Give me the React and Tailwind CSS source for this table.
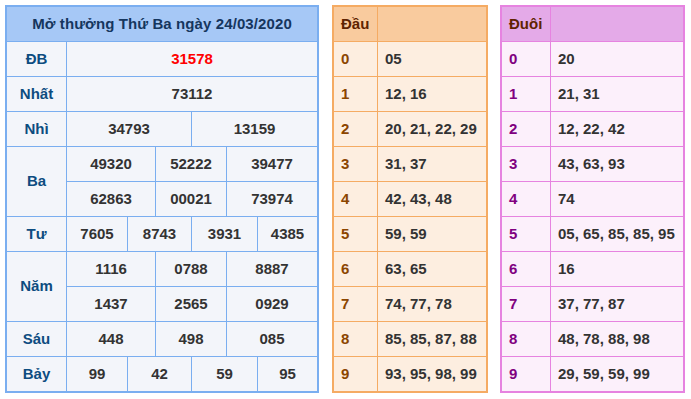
import React from 'react'

const font = { fontFamily: '"Liberation Sans", Arial, sans-serif' }

// left table: border-box widths of the number cells in each row (number area is 250px)
const prizes = [
  { label: 'ĐB', rows: [[{ v: '31578', w: 250, red: true }]] },
  { label: 'Nhất', rows: [[{ v: '73112', w: 250 }]] },
  { label: 'Nhì', rows: [[{ v: '34793', w: 124 }, { v: '13159', w: 126 }]] },
  {
    label: 'Ba',
    rows: [
      [{ v: '49320', w: 88 }, { v: '52222', w: 71 }, { v: '39477', w: 91 }],
      [{ v: '62863', w: 88 }, { v: '00021', w: 71 }, { v: '73974', w: 91 }],
    ],
  },
  {
    label: 'Tư',
    rows: [[{ v: '7605', w: 60 }, { v: '8743', w: 64 }, { v: '3931', w: 66 }, { v: '4385', w: 60 }]],
  },
  {
    label: 'Năm',
    rows: [
      [{ v: '1116', w: 88 }, { v: '0788', w: 71 }, { v: '8887', w: 91 }],
      [{ v: '1437', w: 88 }, { v: '2565', w: 71 }, { v: '0929', w: 91 }],
    ],
  },
  { label: 'Sáu', rows: [[{ v: '448', w: 88 }, { v: '498', w: 71 }, { v: '085', w: 91 }]] },
  {
    label: 'Bảy',
    rows: [[{ v: '99', w: 60 }, { v: '42', w: 64 }, { v: '59', w: 66 }, { v: '95', w: 60 }]],
  },
]

const dau = ['05', '12, 16', '20, 21, 22, 29', '31, 37', '42, 43, 48', '59, 59', '63, 65', '74, 77, 78', '85, 85, 87, 88', '93, 95, 98, 99']
const duoi = ['20', '21, 31', '12, 22, 42', '43, 63, 93', '74', '05, 65, 85, 85, 95', '16', '37, 77, 87', '48, 78, 88, 98', '29, 59, 59, 99']

function PrizeTable() {
  return (
    <div className="w-[314px] shrink-0 border-2 border-[#7aaef0] bg-[#f3f5fa] text-[15px] font-bold">
      <div className="h-[35px] border-b border-[#7aaef0] bg-[#a6c8f6] flex items-center justify-center text-[#15365e] tracking-[0.1px]">
        Mở thưởng Thứ Ba ngày 24/03/2020
      </div>
      {prizes.map((p, i) => (
        <div key={p.label} className={'flex ' + (i < prizes.length - 1 ? 'border-b border-[#7aaef0]' : '')}>
          <div className="w-[60px] shrink-0 border-r border-[#7aaef0] flex items-center justify-center text-[#0d4c80]">
            {p.label}
          </div>
          <div className="w-[250px] shrink-0 flex flex-col">
            {p.rows.map((r, j) => (
              <div key={j} className={'flex ' + (j < p.rows.length - 1 ? 'h-[35px] border-b border-[#7aaef0]' : 'h-[34px]')}>
                {r.map((c, k) => (
                  <div
                    key={k}
                    style={{ width: c.w }}
                    className={
                      'shrink-0 flex items-center justify-center ' +
                      (k > 0 ? 'border-l border-[#7aaef0] ' : '') +
                      (c.red ? 'text-[#ff0000]' : 'text-[#333333]')
                    }
                  >
                    {c.v}
                  </div>
                ))}
              </div>
            ))}
          </div>
        </div>
      ))}
    </div>
  )
}

function LotoTable({ title, data, width, col, border, head, body, digit }) {
  return (
    <div className={'shrink-0 border-2 text-[15px] font-bold ' + width + ' ' + border + ' ' + body}>
      <div className={'flex h-[35px] border-b ' + border + ' ' + head}>
        <div className={'shrink-0 border-r flex items-center px-[7px] text-[#5e2300] ' + col + ' ' + border}>{title}</div>
        <div className="flex-1" />
      </div>
      {data.map((v, i) => (
        <div key={i} className={'flex ' + (i < data.length - 1 ? 'h-[35px] border-b ' + border : 'h-[34px]')}>
          <div className={'shrink-0 border-r flex items-center px-[7px] ' + col + ' ' + border + ' ' + digit}>{i}</div>
          <div className="flex-1 flex items-center px-[7px] text-[#333333]">{v}</div>
        </div>
      ))}
    </div>
  )
}

export default function App() {
  return (
    <div className="w-[691px] h-[399px] bg-white pt-[5px] pl-[5px] flex items-start" style={font}>
      <PrizeTable />
      <div className="ml-[13px]">
        <LotoTable
          title="Đầu"
          data={dau}
          width="w-[156px]"
          col="w-[44px]"
          border="border-[#f5ab63]"
          head="bg-[#f9cb9e]"
          body="bg-[#fdeee0]"
          digit="text-[#8b4500]"
        />
      </div>
      <div className="ml-[12px]">
        <LotoTable
          title="Đuôi"
          data={duoi}
          width="w-[185px]"
          col="w-[49px]"
          border="border-[#e683e0]"
          head="bg-[#e4aae8]"
          body="bg-[#fcf0fb]"
          digit="text-[#800080]"
        />
      </div>
    </div>
  )
}
